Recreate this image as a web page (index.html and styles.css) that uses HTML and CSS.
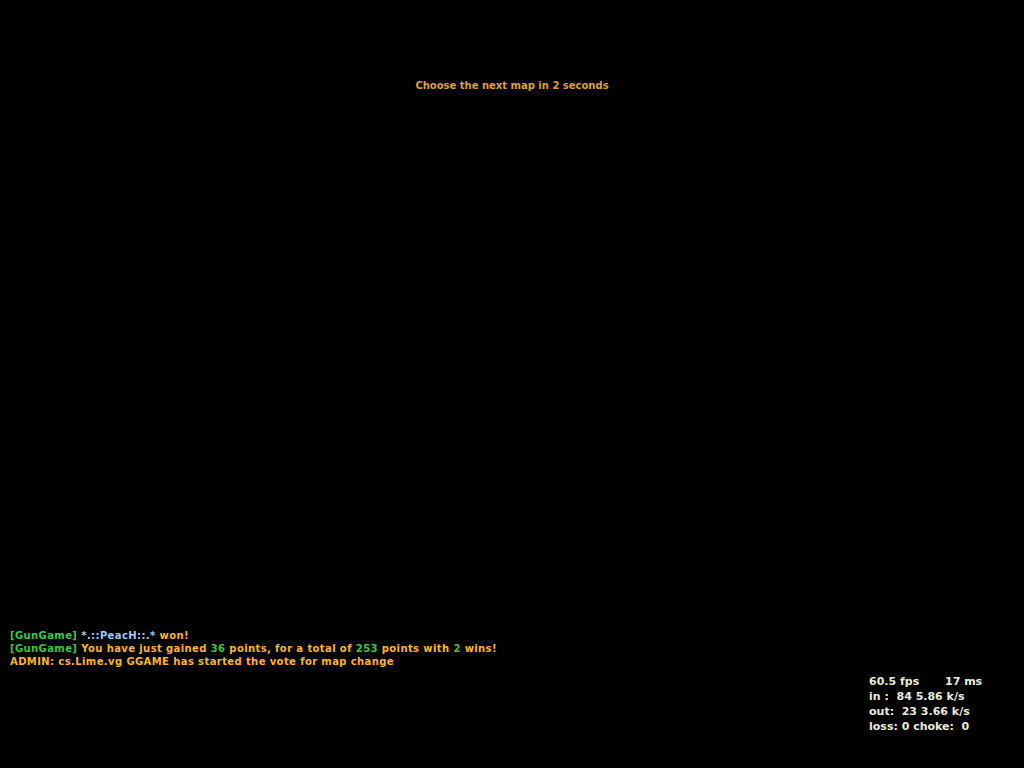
FILE: index.html
```html
<!DOCTYPE html>
<html>
<head>
<meta charset="utf-8">
<link rel="stylesheet" href="styles.css">
</head>
<body>
<div class="screen">
  <div class="title">Choose the next map in 2 seconds</div>
  <div class="spacer"></div>
  <div class="chat">
    <div class="line"><span class="g">[GunGame]</span> <span class="n">*.::PeacH::.*</span> <span class="o">won!</span></div>
    <div class="line"><span class="g">[GunGame]</span> <span class="o">You have just gained </span><span class="g">36</span><span class="o"> points, for a total of </span><span class="g">253</span><span class="o"> points with </span><span class="g">2</span><span class="o"> wins!</span></div>
    <div class="line o">ADMIN: cs.Lime.vg GGAME has started the vote for map change</div>
  </div>
  <div class="net">
    <div class="nrow"><span class="c1">60.5 fps</span><span class="c2">17 ms</span></div>
    <div class="nrow">in :  84 5.86 k/s</div>
    <div class="nrow">out:  23 3.66 k/s</div>
    <div class="nrow">loss: 0 choke:  0</div>
  </div>
</div>
</body>
</html>
```
FILE: styles.css
```css
html, body {
  margin: 0;
  padding: 0;
  background: #000;
}
.screen {
  width: 1024px;
  height: 768px;
  display: flex;
  flex-direction: column;
  font-family: "DejaVu Sans", Verdana, sans-serif;
  font-weight: bold;
  font-size: 10px;
}
.title {
  margin-top: 79px;
  line-height: 14px;
  text-align: center;
  color: #dca22c;
  white-space: pre;
}
.spacer {
  flex: 1;
}
.chat {
  padding-left: 10px;
  line-height: 13px;
  letter-spacing: 0.4px;
}
.line {
  white-space: pre;
}
.g { color: #3cc83c; }
.n { color: #a0c8ff; }
.o { color: #ffb42a; }
.net {
  margin-top: 6px;
  margin-left: 869px;
  margin-bottom: 34px;
  line-height: 15px;
  font-size: 11px;
  color: #ebebd7;
}
.nrow {
  display: flex;
  white-space: pre;
}
.c1 {
  width: 76px;
}
```
